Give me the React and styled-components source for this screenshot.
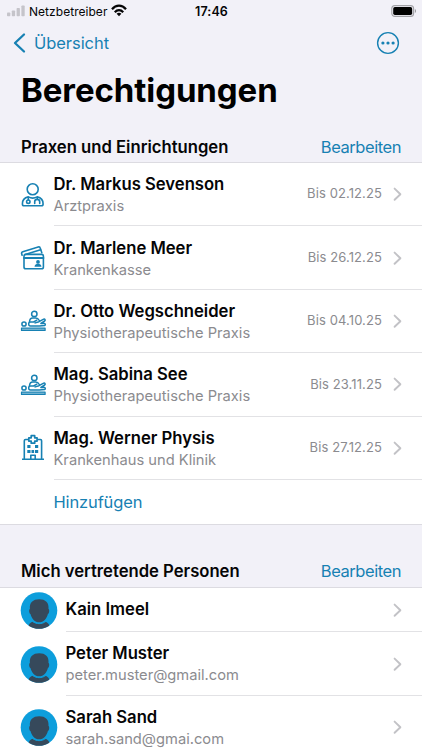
import React from "react";
import styled, { createGlobalStyle } from "styled-components";

const BLUE = "#1781b3";

const GlobalStyle = createGlobalStyle`
  *, *::before, *::after { box-sizing: border-box; }
  html, body { margin: 0; height: 100%; overflow: hidden; background: #f2f1f8; }
  body { font-family: Inter, "Liberation Sans", sans-serif; color: #050506; }
`;

const Screen = styled.main`
  display: flex;
  flex-direction: column;
  width: 422px;
  height: 750px;
  overflow: hidden;
  background: #f2f1f8;
  white-space: nowrap;
`;

const StatusBar = styled.header`
  display: grid;
  grid-template-columns: 1fr auto 1fr;
  align-items: center;
  flex: none;
  height: 22px;
  padding: 0 5px 0 7px;
`;

const Carrier = styled.div`
  display: flex;
  align-items: center;
  gap: 4px;
  font-size: 12px;
  letter-spacing: 0.04px;
`;

const Clock = styled.time`
  margin-right: 1px;
  font-size: 12.5px;
  font-weight: 600;
  letter-spacing: 0.1px;
`;

const BatterySlot = styled.div`
  display: flex;
  justify-content: flex-end;
`;

const NavBar = styled.nav`
  display: flex;
  align-items: center;
  justify-content: space-between;
  flex: none;
  height: 42px;
  padding: 0 22px 0 13px;
`;

const PlainButton = styled.button`
  display: flex;
  align-items: center;
  padding: 0;
  border: 0;
  background: none;
  color: ${BLUE};
  font: inherit;
  font-size: 16.5px;
  line-height: 20px;
  letter-spacing: ${(p) => p.$track || "0"};
`;

const BackButton = styled(PlainButton)`
  gap: 8px;
`;

const Title = styled.h1`
  flex: none;
  height: 63px;
  margin: 0;
  padding: 0 21px;
  color: #000;
  font-size: 33px;
  font-weight: 700;
  line-height: 52px;
  letter-spacing: -0.08px;
`;

const SectionHeader = styled.div`
  display: flex;
  align-items: flex-end;
  justify-content: space-between;
  flex: none;
  height: ${(p) => p.$height};
  padding: 0 21px 5.4px;
`;

const SectionTitle = styled.h2`
  margin: 0;
  font-size: 16.65px;
  font-weight: 600;
  line-height: 20px;
`;

const List = styled.section`
  flex: none;
  background: #fff;
  border-top: 1px solid #dcdbe1;
  border-bottom: 1px solid #dcdbe1;
`;

const Row = styled.div`
  display: flex;
  align-items: stretch;
  height: ${(p) => p.$height || "63.4px"};
  padding-left: 21px;
`;

const Leading = styled.div`
  display: flex;
  align-items: center;
  flex: none;
  width: ${(p) => p.$width};
`;

const RowBody = styled.div`
  display: flex;
  align-items: center;
  flex: 1;
  padding-right: 20px;
  border-bottom: ${(p) => (p.$last ? "0" : "1px solid #e2e2e5")};
`;

const Labels = styled.div`
  flex: 1;
  padding-top: ${(p) => (p.$single ? "0" : "2.9px")};
`;

const Name = styled.div`
  font-size: 16.65px;
  font-weight: 600;
  line-height: 21px;
`;

const Detail = styled.div`
  color: #8b8b8f;
  font-size: 14.7px;
  line-height: 22px;
`;

const Expiry = styled.span`
  margin-right: 11px;
  padding-bottom: 1.6px;
  color: #8b8b8f;
  font-size: 13px;
  letter-spacing: 0.1px;
`;

const Icon = styled.svg`
  display: block;
  flex: none;
  overflow: visible;
`;

const Signal = () => (
  <Icon width="18" height="12" viewBox="0 0 18 12" fill="#c5c4ca">
    <rect x="0" y="7.5" width="3.3" height="3.8" rx="0.8" />
    <rect x="4.8" y="5.5" width="3.3" height="5.8" rx="0.8" />
    <rect x="9.6" y="3" width="3.3" height="8.3" rx="0.8" />
    <rect x="14.4" y="0.5" width="3.3" height="10.8" rx="0.8" />
  </Icon>
);

const Wifi = () => (
  <Icon width="16" height="12" viewBox="0 0 16 12" fill="none" stroke="#050506" strokeWidth="2.2">
    <path d="M1 4.3C5-.5 11-.5 15 4.3" />
    <path d="M3.8 7.2c2.5-2.8 5.9-2.8 8.4 0" />
    <path d="M8 11.3 5.6 8.8c1.4-1.3 3.4-1.3 4.8 0z" fill="#050506" stroke="none" />
  </Icon>
);

const Battery = () => (
  <Icon width="26" height="12" viewBox="0 0 26 12">
    <rect x="0.8" y="0.6" width="21.8" height="10.8" rx="3" fill="none" stroke="#a2a2a7" strokeWidth="1.1" />
    <rect x="2.2" y="2" width="19" height="8" rx="1.7" fill="#000" />
    <path d="M23.9 4v4c1.4-.5 1.4-3.5 0-4z" fill="#909095" />
  </Icon>
);

const BackChevron = () => (
  <Icon width="13" height="20" viewBox="0 0 13 20" fill="none" stroke={BLUE} strokeWidth="2.3" strokeLinecap="round" strokeLinejoin="round">
    <path d="M11 1.5 2 10l9 8.5" />
  </Icon>
);

const More = () => (
  <Icon width="24" height="24" viewBox="0 0 24 24">
    <circle cx="12" cy="12" r="10.4" fill="none" stroke={BLUE} strokeWidth="1.4" />
    <g fill={BLUE}>
      <circle cx="6.9" cy="12" r="1.6" />
      <circle cx="12" cy="12" r="1.6" />
      <circle cx="17.1" cy="12" r="1.6" />
    </g>
  </Icon>
);

const Chevron = () => (
  <Icon width="9" height="14" viewBox="0 0 9 14" fill="none" stroke="#c2c2c6" strokeWidth="1.9" strokeLinecap="round" strokeLinejoin="round">
    <path d="M1.600 1.600 7.400 7.200l-5.800 5.600" />
  </Icon>
);

const Doctor = () => (
  <Icon width="24" height="26" viewBox="0 0 24 26" fill="none" stroke={BLUE} strokeWidth="1.6" strokeLinecap="round" strokeLinejoin="round">
    <circle cx="11.700" cy="7.200" r="5.500" />
    <path d="M7.300 14.900c-4.300.9-6 3.300-5.900 7.100 0 1.200.5 1.800 1.600 1.800h17.500c1.100 0 1.600-.6 1.600-1.800.1-3.800-1.600-6.200-5.900-7.100-2.600 1.500-6.200 1.500-8.900 0z" />
    <path d="M7.300 15.200v2.600M16.200 15.200v2.100M13.700 21.500v-1.700c0-3.300 5-3.300 5 0v1.700" />
    <circle cx="7.300" cy="19.700" r="1.700" />
  </Icon>
);

const Cards = () => (
  <Icon width="24" height="26" viewBox="0 0 24 26" fill="none" stroke={BLUE} strokeWidth="1.6" strokeLinecap="round" strokeLinejoin="round">
    <path d="M1.100 10.200.7 8.700c-.3-1 .1-1.700 1.100-2L17.200 2c1-.3 1.700 0 2 1l1.600 4.700" />
    <path d="m4.200 9.500 15.400-4.700" />
    <rect x="3" y="9.400" width="19.400" height="14.400" rx="1.800" />
    <path d="M3 13h19.400" strokeWidth="2" />
    <circle cx="17" cy="16.900" r="1.900" fill={BLUE} stroke="none" />
    <path d="M13.500 21.800c0-4 7-4 7 0z" fill={BLUE} stroke="none" />
  </Icon>
);

const Massage = () => (
  <Icon width="25" height="22" viewBox="0 0 25 22" fill="none" stroke={BLUE} strokeWidth="1.5" strokeLinecap="round" strokeLinejoin="round">
    <circle cx="13.300" cy="3.900" r="2.700" />
    <circle cx="3" cy="14" r="2.100" />
    <path d="M8.500 11.800c.2-2.400 1.100-3.700 3.200-3.700h3c1.600 0 2.700.8 3.600 2.400" />
    <path d="M15.800 10.200 12.600 12H9.500c-2.400 0-2.400 3.900 0 3.900h8.700l5.400-.3c1-.5.9-1.800-.2-2l-3.500-.1 3.800-2.500c1-.9.200-2.400-1-1.900L18 11.700l-3.800 1.200" />
    <path d="M.5 18.200h23.600v2.200H.5z" strokeWidth="1.200" fill="#8fc3db" />
  </Icon>
);

const Hospital = () => (
  <Icon width="24" height="26" viewBox="0 0 24 26" fill="none" stroke={BLUE} strokeWidth="1.6" strokeLinejoin="round">
    <path d="M7.400 4.500H4.500c-.8 0-1.200.4-1.200 1.200v18.400M16.500 4.500h2.900c.8 0 1.200.4 1.200 1.200v18.400M1 24.300h22" />
    <path d="M10.200.7h3.500v2.100h2.400v3.300h-2.400v2.100h-3.500V6.100H7.800V2.800h2.400z" strokeWidth="1.700" />
    <path d="M9.800 24v-3.800h4.400V24" />
    <g fill={BLUE} stroke="none">
      <rect x="6.300" y="10" width="3.200" height="3" />
      <rect x="14" y="10" width="3.200" height="3" />
      <rect x="6.300" y="15" width="3.200" height="3" />
      <rect x="10.500" y="15" width="2.600" height="3" />
      <rect x="14" y="15" width="3.200" height="3" />
    </g>
  </Icon>
);

const Avatar = () => (
  <Icon width="37" height="37" viewBox="0 0 37 37">
    <circle cx="18" cy="18.500" r="18.300" fill="#0d9edc" />
    <path d="M8.900 17C8.200 10.600 12 7.300 18.200 7.300S28.200 10.600 27.500 17c1.100.1 1 4.600-.6 5-1.200 4.700-4.400 8.300-8.700 8.300s-7.500-3.600-8.700-8.300c-1.600-.4-1.700-4.900-.6-5z" fill="#36495b" />
    <path d="M7.700 33.700c.4-2 1.900-3.300 4.200-3.900 3.700 2.500 8.500 2.500 12.200 0 2.300.6 3.800 1.900 4.200 3.900-6.200 4.100-14.400 4.100-20.600 0z" fill="#36495b" />
    <path d="M11.500 29.400c3.900 3 9.500 3 13.400 0" fill="none" stroke="#0d9edc" strokeWidth="1" />
  </Icon>
);

const practices = [
  { name: "Dr. Markus Sevenson", detail: "Arztpraxis", until: "02.12.25", Glyph: Doctor },
  { name: "Dr. Marlene Meer", detail: "Krankenkasse", until: "26.12.25", Glyph: Cards },
  { name: "Dr. Otto Wegschneider", detail: "Physiotherapeutische Praxis", until: "04.10.25", Glyph: Massage },
  { name: "Mag. Sabina See", detail: "Physiotherapeutische Praxis", until: "23.11.25", Glyph: Massage },
  { name: "Mag. Werner Physis", detail: "Krankenhaus und Klinik", until: "27.12.25", Glyph: Hospital },
];

const people = [
  { name: "Kain Imeel", height: "44.5px" },
  { name: "Peter Muster", detail: "peter.muster@gmail.com" },
  { name: "Sarah Sand", detail: "sarah.sand@gmai.com" },
];

export default function App() {
  return (
    <Screen>
      <GlobalStyle />
      <StatusBar>
        <Carrier>
          <Signal />
          <span>Netzbetreiber</span>
          <Wifi />
        </Carrier>
        <Clock>17:46</Clock>
        <BatterySlot><Battery /></BatterySlot>
      </StatusBar>
      <NavBar>
        <BackButton $track="-0.05px"><BackChevron />Übersicht</BackButton>
        <PlainButton aria-label="Mehr"><More /></PlainButton>
      </NavBar>
      <Title>Berechtigungen</Title>
      <SectionHeader $height="35px">
        <SectionTitle>Praxen und Einrichtungen</SectionTitle>
        <PlainButton $track="-0.45px">Bearbeiten</PlainButton>
      </SectionHeader>
      <List>
        {practices.map(({ name, detail, until, Glyph }) => (
          <Row key={name}>
            <Leading $width="32.5px"><Glyph /></Leading>
            <RowBody>
              <Labels>
                <Name>{name}</Name>
                <Detail>{detail}</Detail>
              </Labels>
              <Expiry>Bis {until}</Expiry>
              <Chevron />
            </RowBody>
          </Row>
        ))}
        <Row $height="43.9px">
          <Leading $width="32.5px" />
          <RowBody $last><PlainButton $track="-0.15px">Hinzufügen</PlainButton></RowBody>
        </Row>
      </List>
      <SectionHeader $height="62px">
        <SectionTitle>Mich vertretende Personen</SectionTitle>
        <PlainButton $track="-0.45px">Bearbeiten</PlainButton>
      </SectionHeader>
      <List>
        {people.map(({ name, detail, height }) => (
          <Row key={name} $height={height}>
            <Leading $width="44.5px"><Avatar /></Leading>
            <RowBody>
              <Labels $single={!detail}>
                <Name>{name}</Name>
                {detail && <Detail>{detail}</Detail>}
              </Labels>
              <Chevron />
            </RowBody>
          </Row>
        ))}
      </List>
    </Screen>
  );
}
